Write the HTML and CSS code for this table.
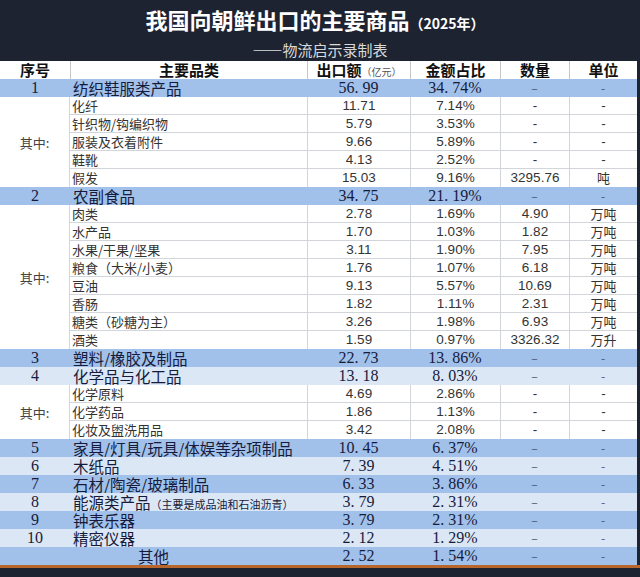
FILE: index.html
```html
<!DOCTYPE html>
<html lang="zh">
<head>
<meta charset="utf-8">
<link rel="stylesheet" href="styles.css">
</head>
<body>
<div class="page">
  <header class="head">
    <h1 class="title">我国向朝鲜出口的主要商品<span class="year">（2025年）</span></h1>
    <p class="sub">——物流启示录制表</p>
  </header>
  <div class="grid">
    <div class="row hrow"><div>序号</div><div>主要品类</div><div>出口额<small>（亿元）</small></div><div>金额占比</div><div>数量</div><div>单位</div></div>

    <div class="row main dark"><div class="no">1</div><div class="cat">纺织鞋服类产品</div><div class="num">56. 99</div><div class="num">34. 74%</div><div class="dash">–</div><div class="dash">-</div></div>
    <div class="row sub"><div class="qz span5">其中:</div><div class="scat">化纤</div><div>11.71</div><div>7.14%</div><div>-</div><div>-</div></div>
    <div class="row sub"><div class="scat">针织物/钩编织物</div><div>5.79</div><div>3.53%</div><div>-</div><div>-</div></div>
    <div class="row sub"><div class="scat">服装及衣着附件</div><div>9.66</div><div>5.89%</div><div>-</div><div>-</div></div>
    <div class="row sub"><div class="scat">鞋靴</div><div>4.13</div><div>2.52%</div><div>-</div><div>-</div></div>
    <div class="row sub last"><div class="scat">假发</div><div>15.03</div><div>9.16%</div><div>3295.76</div><div class="unit">吨</div></div>

    <div class="row main dark"><div class="no">2</div><div class="cat">农副食品</div><div class="num">34. 75</div><div class="num">21. 19%</div><div class="dash">–</div><div class="dash">-</div></div>
    <div class="row sub"><div class="qz span8">其中:</div><div class="scat">肉类</div><div>2.78</div><div>1.69%</div><div>4.90</div><div class="unit">万吨</div></div>
    <div class="row sub"><div class="scat">水产品</div><div>1.70</div><div>1.03%</div><div>1.82</div><div class="unit">万吨</div></div>
    <div class="row sub"><div class="scat">水果/干果/坚果</div><div>3.11</div><div>1.90%</div><div>7.95</div><div class="unit">万吨</div></div>
    <div class="row sub"><div class="scat">粮食（大米/小麦）</div><div>1.76</div><div>1.07%</div><div>6.18</div><div class="unit">万吨</div></div>
    <div class="row sub"><div class="scat">豆油</div><div>9.13</div><div>5.57%</div><div>10.69</div><div class="unit">万吨</div></div>
    <div class="row sub"><div class="scat">香肠</div><div>1.82</div><div>1.11%</div><div>2.31</div><div class="unit">万吨</div></div>
    <div class="row sub"><div class="scat">糖类（砂糖为主）</div><div>3.26</div><div>1.98%</div><div>6.93</div><div class="unit">万吨</div></div>
    <div class="row sub last"><div class="scat">酒类</div><div>1.59</div><div>0.97%</div><div>3326.32</div><div class="unit">万升</div></div>

    <div class="row main dark"><div class="no">3</div><div class="cat">塑料/橡胶及制品</div><div class="num">22. 73</div><div class="num">13. 86%</div><div class="dash">–</div><div class="dash">-</div></div>
    <div class="row main light"><div class="no">4</div><div class="cat">化学品与化工品</div><div class="num">13. 18</div><div class="num">8. 03%</div><div class="dash">–</div><div class="dash">-</div></div>
    <div class="row sub"><div class="qz span3">其中:</div><div class="scat">化学原料</div><div>4.69</div><div>2.86%</div><div>-</div><div>-</div></div>
    <div class="row sub"><div class="scat">化学药品</div><div>1.86</div><div>1.13%</div><div>-</div><div>-</div></div>
    <div class="row sub last"><div class="scat">化妆及盥洗用品</div><div>3.42</div><div>2.08%</div><div>-</div><div>-</div></div>

    <div class="row main dark"><div class="no">5</div><div class="cat">家具/灯具/玩具/体娱等杂项制品</div><div class="num">10. 45</div><div class="num">6. 37%</div><div class="dash">–</div><div class="dash">-</div></div>
    <div class="row main light"><div class="no">6</div><div class="cat">木纸品</div><div class="num">7. 39</div><div class="num">4. 51%</div><div class="dash">–</div><div class="dash">-</div></div>
    <div class="row main dark"><div class="no">7</div><div class="cat">石材/陶瓷/玻璃制品</div><div class="num">6. 33</div><div class="num">3. 86%</div><div class="dash">–</div><div class="dash">-</div></div>
    <div class="row main light"><div class="no">8</div><div class="cat">能源类产品<small>（主要是成品油和石油沥青）</small></div><div class="num">3. 79</div><div class="num">2. 31%</div><div class="dash">–</div><div class="dash">-</div></div>
    <div class="row main dark"><div class="no">9</div><div class="cat">钟表乐器</div><div class="num">3. 79</div><div class="num">2. 31%</div><div class="dash">–</div><div class="dash">-</div></div>
    <div class="row main light"><div class="no">10</div><div class="cat">精密仪器</div><div class="num">2. 12</div><div class="num">1. 29%</div><div class="dash">–</div><div class="dash">-</div></div>
    <div class="row main dark"><div class="other">其他</div><div class="num">2. 52</div><div class="num">1. 54%</div><div class="dash">–</div><div class="dash">-</div></div>
  </div>
  <div class="bottom"></div>
</div>
</body>
</html>
```
FILE: styles.css
```css
html, body {
  margin: 0;
  padding: 0;
  background: #1d2330;
}
.page {
  width: 640px;
  height: 577px;
  overflow: hidden;
  background: #1d2330;
  font-family: "Noto Sans CJK SC", "Noto Sans", sans-serif;
}
.head {
  height: 61px;
  box-sizing: border-box;
  padding-top: 5px;
  text-align: center;
  color: #fff;
}
.title {
  margin: 0;
  font-size: 22px;
  line-height: 28px;
  font-weight: 700;
  padding-right: 10px;
}
.year {
  font-size: 14px;
  font-weight: 700;
}
.sub {
  margin: 3px 0 0;
  font-size: 15px;
  line-height: 20px;
  color: #d9d9d9;
}
.grid {
  width: 637px;
  display: grid;
  grid-template-columns: 70px 237px 103px 90px 69px 68px;
  grid-auto-rows: 18px;
}
.row { display: contents; }
.row > div {
  box-sizing: border-box;
  height: 18px;
  line-height: 18px;
  white-space: nowrap;
  text-align: center;
}
.hrow > div {
  background: #fff;
  color: #111;
  font-size: 15px;
  font-weight: 700;
  line-height: 17px;
  border-left: 1px solid #c9c9c9;
}
.hrow > div:first-child { border-left: none; }
.hrow small {
  font-size: 10px;
  font-weight: 400;
  color: #555;
}
.main > div {
  color: #161b3c;
  font-size: 15.5px;
}
.main.dark > div { background: #a1c1ea; }
.main.light > div { background: #dce7f5; }
.main .no {
  font-family: "Liberation Serif", serif;
  font-size: 16px;
}
.main .cat {
  text-align: left;
  padding-left: 3px;
}
.main .cat small {
  font-size: 11px;
}
.main .num {
  font-family: "Liberation Serif", serif;
  font-size: 16px;
}
.main .dash {
  color: #4a5670;
  font-size: 12px;
}
.main .other {
  grid-column: span 2;
}
.sub > div {
  background: #fff;
  color: #333;
  font-family: "Liberation Sans Narrow", "Liberation Sans", "Noto Sans CJK SC", sans-serif;
  font-size: 13.5px;
  line-height: 17px;
  border-bottom: 1px solid #d2d5da;
  border-left: 1px solid #d2d5da;
}
.sub.last > div { border-bottom: none; }
.sub .qz {
  font-family: "Noto Sans CJK SC", sans-serif;
  font-size: 13px;
  color: #444;
  border: none;
  border-right: 1px solid #d2d5da;
  display: flex;
  align-items: center;
  justify-content: center;
}
.sub .qz.span5 { grid-row: span 5; height: 90px; }
.sub .qz.span8 { grid-row: span 8; height: 144px; }
.sub .qz.span3 { grid-row: span 3; height: 54px; }
.sub .scat {
  text-align: left;
  padding-left: 2px;
  font-family: "Noto Sans CJK SC", sans-serif;
  font-size: 13px;
  border-left: none;
}
.sub .unit {
  font-family: "Noto Sans CJK SC", sans-serif;
  font-size: 13px;
}
.bottom {
  height: 3px;
  background: #b9662c;
}
```
